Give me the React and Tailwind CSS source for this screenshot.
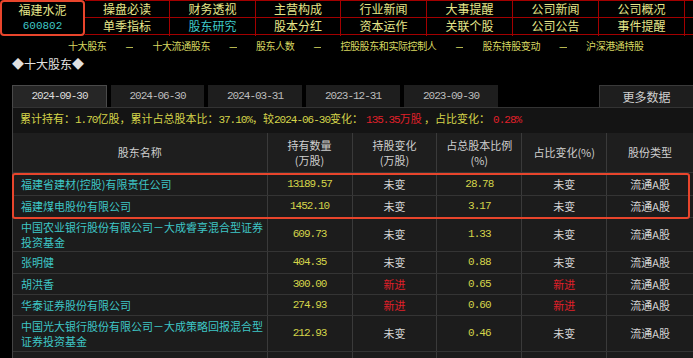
const navTop = ['操盘必读', '财务透视', '主营构成', '行业新闻', '大事提醒', '公司新闻', '公司概况'];
const navBottom = ['单季指标', '股东研究', '股本分红', '资本运作', '关联个股', '公司公告', '事件提醒'];
const navWidths = ['w-[85px]', 'w-[86px]', 'w-[85px]', 'w-[86px]', 'w-[86px]', 'w-[86px]', 'w-[86px]'];

const links = ['十大股东', '十大流通股东', '股东人数', '控股股东和实际控制人', '股东持股变动', '沪深港通持股'];

const tabs = [
  { label: '2024-09-30', w: 'w-[95px]' },
  { label: '2024-06-30', w: 'w-[93px]' },
  { label: '2024-03-31', w: 'w-[94px]' },
  { label: '2023-12-31', w: 'w-[94px]' },
  { label: '2023-09-30', w: 'w-[94px]' },
];

const rows = [
  { name: ['福建省建材(控股)有限责任公司'], qty: '13189.57', chg: '未变', pct: '28.78', pchg: '未变', h: 'h-[23px]' },
  { name: ['福建煤电股份有限公司'], qty: '1452.10', chg: '未变', pct: '3.17', pchg: '未变', h: 'h-[22px]' },
  { name: ['中国农业银行股份有限公司－大成睿享混合型证券', '投资基金'], qty: '609.73', chg: '未变', pct: '1.33', pchg: '未变', h: 'h-[34px]' },
  { name: ['张明健'], qty: '404.35', chg: '未变', pct: '0.88', pchg: '未变', h: 'h-[22px]' },
  { name: ['胡洪香'], qty: '300.00', chg: '新进', pct: '0.65', pchg: '新进', h: 'h-[21px]' },
  { name: ['华泰证券股份有限公司'], qty: '274.93', chg: '新进', pct: '0.60', pchg: '新进', h: 'h-[21px]' },
  { name: ['中国光大银行股份有限公司－大成策略回报混合型', '证券投资基金'], qty: '212.93', chg: '未变', pct: '0.46', pchg: '未变', h: 'h-[36px]' },
  { name: [''], qty: '', chg: '', pct: '', pchg: '', h: 'h-[22px]' },
];

const cjk = { fontFamily: '"Noto Sans CJK SC", "Liberation Sans", sans-serif' };
const mono = { fontFamily: '"Liberation Mono", "Noto Sans CJK SC", monospace' };

const changeColor = (v) => (v === '新进' ? 'text-[#e0202a]' : 'text-[#d6d6d6]');

const Row = ({ r }) => (
  <div className={`flex ${r.h} border-b border-[#343434] bg-[#1c1c1c]`}>
    <div className="w-[255px] flex flex-col justify-center pl-[8px] border-r border-[#3a3a3a] text-[#3ec6c6] leading-[15px]">
      {r.name.map((n, i) => (
        <span key={i}>{n}</span>
      ))}
    </div>
    <div className="w-[85px] flex items-center justify-center border-r border-[#3a3a3a] text-[#d4d44a] tracking-[-1px]" style={mono}>
      {r.qty}
    </div>
    <div className={`w-[85px] flex items-center justify-center border-r border-[#3a3a3a] ${changeColor(r.chg)}`}>{r.chg}</div>
    <div className="w-[85px] flex items-center justify-center border-r border-[#3a3a3a] text-[#d4d44a] tracking-[-1px]" style={mono}>
      {r.pct}
    </div>
    <div className={`w-[85px] flex items-center justify-center border-r border-[#3a3a3a] ${changeColor(r.pchg)}`}>{r.pchg}</div>
    <div className="w-[86px] flex items-center justify-center text-[#d6d6d6]">{r.qty ? '流通A股' : ''}</div>
  </div>
);

export default function App() {
  return (
    <div className="w-[693px] h-[358px] bg-black overflow-hidden text-[11px]" style={cjk}>
      {/* top nav */}
      <div className="flex h-[36px]">
        <div className="w-[85px] h-[36px] shrink-0 border-2 border-[#e8452c] rounded-[4px] flex flex-col items-center justify-center leading-[16px]">
          <span className="text-[#e6e68a] text-[12px]">福建水泥</span>
          <span className="text-[#3ec6c6] text-[11px]" style={mono}>600802</span>
        </div>
        <div className="flex-1 flex border-t border-[#a30000]">
          {navTop.map((t, i) => (
            <div key={t} className={`${navWidths[i]} shrink-0 flex flex-col border-r border-[#a30000]`}>
              <div className="h-[17px] flex items-center justify-center border-b border-[#a30000] text-[#e6e68a] text-[12px]">{t}</div>
              <div className={`h-[17px] flex items-center justify-center border-b border-[#a30000] text-[12px] ${navBottom[i] === '股东研究' ? 'text-[#3ec6c6]' : 'text-[#e6e68a]'}`}>
                {navBottom[i]}
              </div>
            </div>
          ))}
          <div className="flex-1 flex flex-col">
            <div className="h-[17px] border-b border-[#a30000]" />
            <div className="h-[17px] border-b border-[#a30000]" />
          </div>
        </div>
      </div>

      {/* sub links */}
      <div className="flex items-center h-[18px] pl-[68px] gap-[19px] text-[10px] tracking-[-0.4px] text-[#d8d860]">
        {links.map((l, i) => (
          <div key={l} className="flex items-center gap-[19px]">
            {i > 0 && <span className="w-[8px] overflow-hidden">—</span>}
            <span>{l}</span>
          </div>
        ))}
      </div>

      <div className="h-[20px] pl-[12px] flex items-center text-[12px] text-[#e0e0e0]">◆十大股东◆</div>

      {/* tabs */}
      <div className="mt-[11px] ml-[12px] flex h-[22px]">
        {tabs.map((t, i) => (
          <div
            key={t.label}
            className={`${t.w} shrink-0 mr-[4px] flex items-center justify-center tracking-[-1px] ${
              i === 0 ? 'bg-[#262626] border-t border-x border-[#4a4a4a] text-[#dcdcdc]' : 'bg-[#1e1e1e] text-[#bdbdbd]'
            }`}
            style={mono}
          >
            {t.label}
          </div>
        ))}
        <div className="flex-1" />
        <div className="w-[94px] bg-[#1e1e1e] border-t border-l border-[#3a3a3a] flex items-center justify-center text-[#cfcfcf] text-[12px]">更多数据</div>
      </div>

      {/* table */}
      <div className="ml-[12px] border-l border-[#444]">
        <div className="h-[26px] bg-[#141414] border-t border-[#333] pl-[7px] pt-[2px] leading-[16px] text-[#d4d44a]">
          累计持有：<span style={mono} className="tracking-[-1px]">1.70</span>亿股，累计占总股本比：
          <span style={mono} className="tracking-[-1px]">37.10%</span>，较<span style={mono} className="tracking-[-1px]">2024-06-30</span>变化：
          <span className="text-[#e0202a] ml-[3px]"><span style={mono} className="tracking-[-1px]">135.35</span>万股</span> ，占比变化：
          <span className="text-[#e0202a] ml-[3px] tracking-[-1px]" style={mono}>0.28%</span>
        </div>

        <div className="flex h-[40px] bg-[#1e1e1e] border-b border-[#343434] text-[#cfcfcf] leading-[15px]">
          <div className="w-[255px] flex items-center justify-center border-r border-[#3a3a3a]">股东名称</div>
          <div className="w-[85px] flex flex-col items-center justify-center border-r border-[#3a3a3a]">
            <span>持有数量</span>
            <span>(万股)</span>
          </div>
          <div className="w-[85px] flex flex-col items-center justify-center border-r border-[#3a3a3a]">
            <span>持股变化</span>
            <span>(万股)</span>
          </div>
          <div className="w-[85px] flex flex-col items-center justify-center border-r border-[#3a3a3a]">
            <span>占总股本比例</span>
            <span>(%)</span>
          </div>
          <div className="w-[85px] flex items-center justify-center border-r border-[#3a3a3a]">占比变化(%)</div>
          <div className="w-[86px] flex items-center justify-center">股份类型</div>
        </div>

        <div className="relative">
          <Row r={rows[0]} />
          <Row r={rows[1]} />
          <div className="absolute left-[-1px] right-[3px] top-[0px] bottom-[-1px] border-2 border-[#e8452c] rounded-[3px] pointer-events-none" />
        </div>
        {rows.slice(2).map((r, i) => (
          <Row key={i} r={r} />
        ))}
      </div>
    </div>
  );
}
